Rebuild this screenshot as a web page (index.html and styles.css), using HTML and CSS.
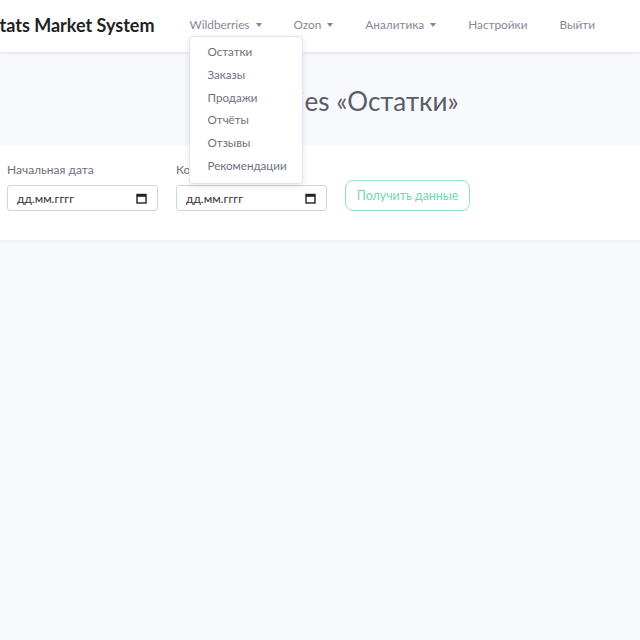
FILE: index.html
```html
<!DOCTYPE html>
<html lang="ru">
<head>
<meta charset="utf-8">
<title>Stats Market System</title>
<link rel="stylesheet" href="styles.css">
</head>
<body>
<nav class="navbar">
  <div class="brand">Stats Market System</div>
  <ul class="nav">
    <li class="nav-item dropdown">
      <span class="nav-link">Wildberries <span class="caret"></span></span>
      <ul class="dropdown-menu">
        <li>Остатки</li>
        <li>Заказы</li>
        <li>Продажи</li>
        <li>Отчёты</li>
        <li>Отзывы</li>
        <li>Рекомендации</li>
      </ul>
    </li>
    <li class="nav-item"><span class="nav-link">Ozon <span class="caret"></span></span></li>
    <li class="nav-item"><span class="nav-link">Аналитика <span class="caret"></span></span></li>
    <li class="nav-item"><span class="nav-link">Настройки</span></li>
    <li class="nav-item"><span class="nav-link">Выйти</span></li>
  </ul>
</nav>
<header class="page-head">
  <h1 class="title">Wildberries «Остатки»</h1>
</header>
<section class="card">
  <form class="filters">
    <div class="field">
      <label class="label">Начальная дата</label>
      <div class="date-input"><span>дд.мм.гггг</span>
        <svg class="cal" width="11" height="11" viewBox="0 0 11 11"><rect x="1" y="1.5" width="9" height="8.5" fill="none" stroke="#222" stroke-width="1.4"/><rect x="1" y="1.5" width="9" height="2.3" fill="#222"/></svg>
      </div>
    </div>
    <div class="field">
      <label class="label">Конечная дата</label>
      <div class="date-input"><span>дд.мм.гггг</span>
        <svg class="cal" width="11" height="11" viewBox="0 0 11 11"><rect x="1" y="1.5" width="9" height="8.5" fill="none" stroke="#222" stroke-width="1.4"/><rect x="1" y="1.5" width="9" height="2.3" fill="#222"/></svg>
      </div>
    </div>
    <button type="button" class="btn">Получить данные</button>
  </form>
</section>
</body>
</html>
```
FILE: styles.css
```css
* { box-sizing: border-box; }
html, body { margin: 0; padding: 0; }
body {
  background: #f8f9fc;
  font-family: "Lato", "Open Sans", sans-serif;
  color: #858796;
  height: 640px;
  overflow: hidden;
}
.navbar {
  height: 52px;
  background: #fff;
  display: flex;
  align-items: center;
  box-shadow: 0 1px 3px rgba(58, 59, 69, 0.12);
  position: relative;
  z-index: 2;
}
.brand {
  font-weight: 700;
  font-size: 18px;
  color: #222;
  margin-left: -10px;
  margin-right: 35px;
  white-space: nowrap;
  margin-bottom: 3px;
}
.nav {
  list-style: none;
  margin: 0 0 2px 0;
  padding: 0;
  display: flex;
}
.nav-item { position: relative; }
.nav-link {
  display: block;
  font-size: 11.8px;
  color: #858796;
  padding: 0 16px;
  line-height: 40px;
  white-space: nowrap;
}
.nav-item:first-child .nav-link { padding-left: 0; }
.caret {
  display: inline-block;
  width: 0; height: 0;
  border-left: 3.5px solid transparent;
  border-right: 3.5px solid transparent;
  border-top: 4px solid #858796;
  vertical-align: 2px;
  margin-left: 3px;
}
.dropdown-menu {
  position: absolute;
  top: 31px;
  left: 0;
  width: 114px;
  list-style: none;
  margin: 0;
  padding: 4px 0 5px;
  background: #fff;
  border: 1px solid #e3e6f0;
  border-radius: 4px;
  box-shadow: 0 2px 6px rgba(58, 59, 69, 0.12);
}
.dropdown-menu li {
  font-size: 11.6px;
  color: #6e707e;
  padding: 0 17px;
  line-height: 22.8px;
  white-space: nowrap;
}
.page-head {
  height: 93px;
  display: flex;
  align-items: center;
  justify-content: center;
  padding-top: 4px;
}
.title {
  margin: 0;
  font-weight: 400;
  font-size: 26px;
  color: #5a5c69;
  padding-left: 16px;
}
.card {
  background: #fff;
  height: 95px;
  box-shadow: 0 1px 2px rgba(58, 59, 69, 0.08);
}
.filters {
  display: flex;
  align-items: flex-end;
  gap: 18px;
  padding: 17px 0 0 7px;
  margin: 0;
}
.field { display: flex; flex-direction: column; gap: 7px; }
.label { font-size: 12px; color: #6e707e; line-height: 16px; }
.date-input {
  width: 151px;
  height: 26px;
  border: 1px solid #d1d3e2;
  border-radius: 3px;
  display: flex;
  align-items: center;
  justify-content: space-between;
  padding: 0 10px 0 9px;
  font-size: 12px;
  color: #333;
}
.btn {
  height: 31px;
  width: 125px;
  border: 1.5px solid #8ee6c1;
  border-radius: 8px;
  background: #fff;
  color: #6fd9a9;
  font-family: inherit;
  font-size: 12.4px;
  padding: 0;
}
```
